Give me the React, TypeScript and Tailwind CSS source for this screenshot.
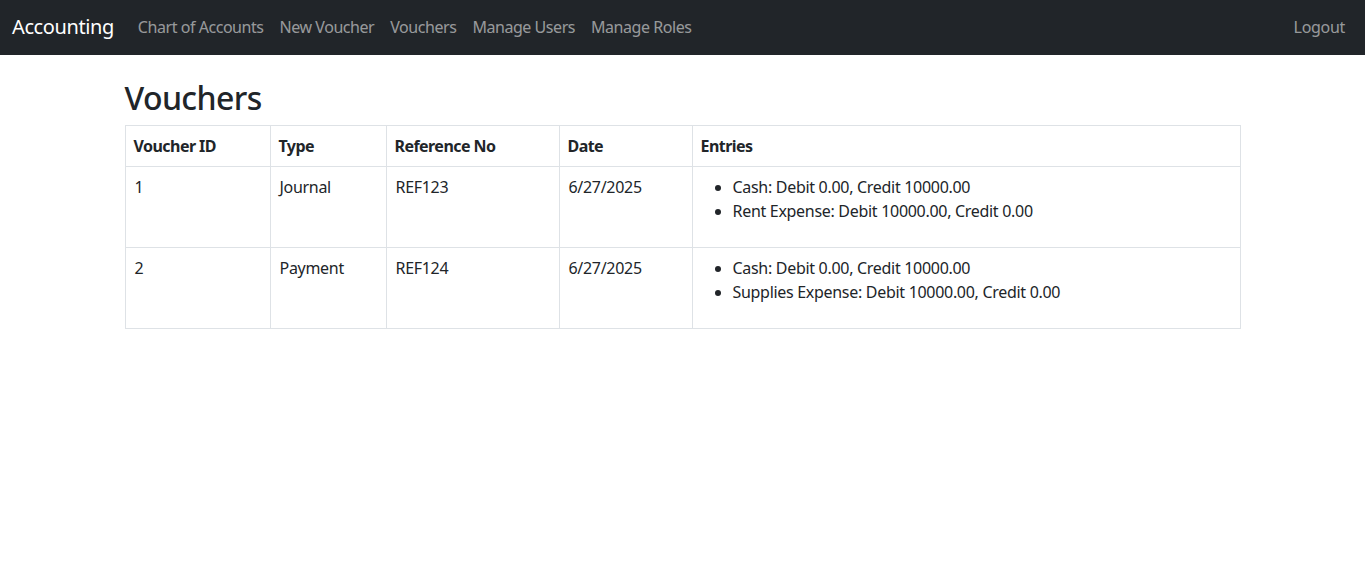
import React from 'react';

interface Entry {
  account: string;
  debit: string;
  credit: string;
}

interface Voucher {
  id: number;
  type: string;
  referenceNo: string;
  date: string;
  entries: Entry[];
}

const vouchers: Voucher[] = [
  {
    id: 1,
    type: 'Journal',
    referenceNo: 'REF123',
    date: '6/27/2025',
    entries: [
      { account: 'Cash', debit: '0.00', credit: '10000.00' },
      { account: 'Rent Expense', debit: '10000.00', credit: '0.00' },
    ],
  },
  {
    id: 2,
    type: 'Payment',
    referenceNo: 'REF124',
    date: '6/27/2025',
    entries: [
      { account: 'Cash', debit: '0.00', credit: '10000.00' },
      { account: 'Supplies Expense', debit: '10000.00', credit: '0.00' },
    ],
  },
];

const navLinks = ['Chart of Accounts', 'New Voucher', 'Vouchers', 'Manage Users', 'Manage Roles'];

const App: React.FC = () => {
  return (
    <div className="min-h-screen bg-white text-[#212529] font-['Noto_Sans',sans-serif] text-[16px] leading-6 tracking-[-0.3px]">
      {/* Navbar */}
      <nav className="h-[55px] bg-[#212529] flex items-center px-3 pb-[2px]">
        <span className="text-[20px] text-white mr-4 leading-[30px] tracking-[-0.4px]">Accounting</span>
        <div className="flex items-center">
          {navLinks.map((link) => (
            <a key={link} className="px-2 text-[rgba(255,255,255,0.55)] tracking-[-0.45px]">
              {link}
            </a>
          ))}
        </div>
        <a className="ml-auto px-2 text-[rgba(255,255,255,0.55)]">Logout</a>
      </nav>

      {/* Content */}
      <div className="w-[1140px] mx-auto px-3 mt-6">
        <h2 className="text-[32px] font-medium leading-[38px] mb-2 tracking-[-0.6px]">Vouchers</h2>
        <table className="w-full border-collapse border border-[#dee2e6]">
          <thead>
            <tr className="tracking-[-0.55px]">
              <th className="w-[145px] border border-[#dee2e6] p-2 text-left font-bold">Voucher ID</th>
              <th className="w-[116px] border border-[#dee2e6] p-2 text-left font-bold">Type</th>
              <th className="w-[173px] border border-[#dee2e6] p-2 text-left font-bold">Reference No</th>
              <th className="w-[133px] border border-[#dee2e6] p-2 text-left font-bold">Date</th>
              <th className="border border-[#dee2e6] p-2 text-left font-bold">Entries</th>
            </tr>
          </thead>
          <tbody>
            {vouchers.map((v) => (
              <tr key={v.id}>
                <td className="border border-[#dee2e6] py-2 pl-[9px] pr-2 align-top">{v.id}</td>
                <td className="border border-[#dee2e6] py-2 pl-[9px] pr-2 align-top">{v.type}</td>
                <td className="border border-[#dee2e6] py-2 pl-[9px] pr-2 align-top">{v.referenceNo}</td>
                <td className="border border-[#dee2e6] py-2 pl-[9px] pr-2 align-top">{v.date}</td>
                <td className="border border-[#dee2e6] p-2 align-top">
                  <ul className="list-disc pl-8 mb-4">
                    {v.entries.map((e) => (
                      <li key={e.account}>
                        {e.account}: Debit {e.debit}, Credit {e.credit}
                      </li>
                    ))}
                  </ul>
                </td>
              </tr>
            ))}
          </tbody>
        </table>
      </div>
    </div>
  );
};

export default App;
